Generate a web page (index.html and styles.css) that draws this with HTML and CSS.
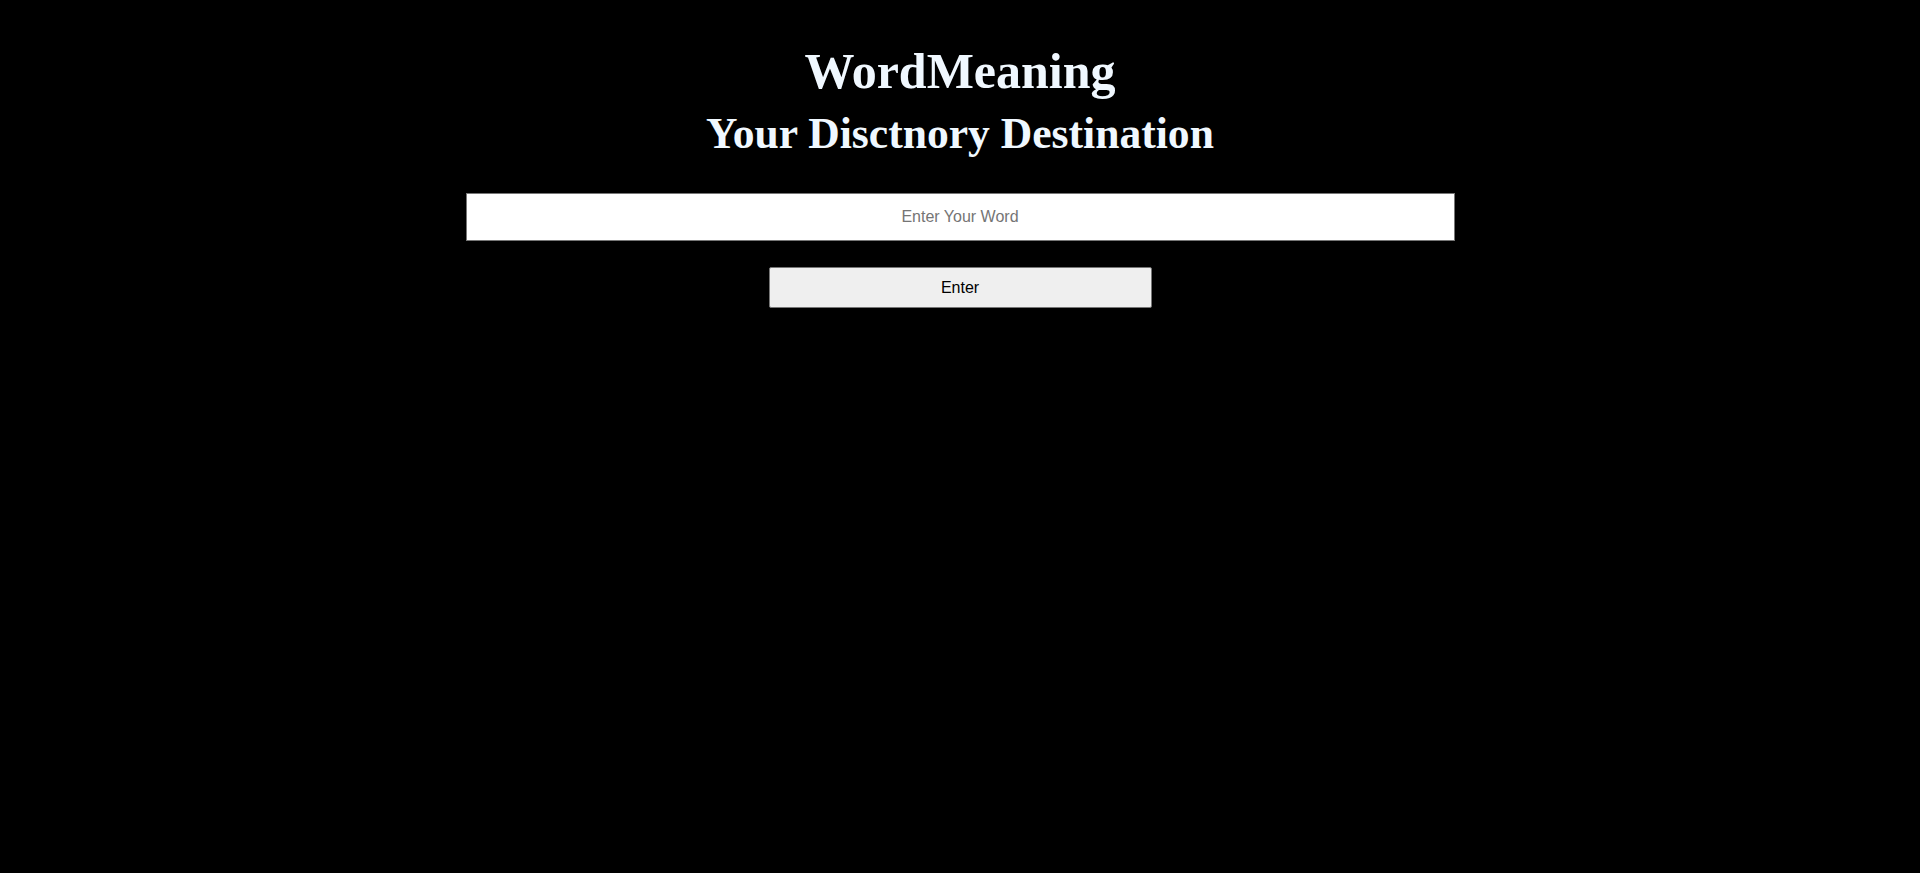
FILE: index.html
```html
<!DOCTYPE html>
<html>
<head>
<meta charset="utf-8">
<link rel="stylesheet" href="styles.css">
</head>
<body>
<main class="page">
  <header class="heading">
    <h1 class="title">WordMeaning</h1>
    <h2 class="subtitle">Your Disctnory Destination</h2>
  </header>
  <form class="search">
    <input class="word-input" type="text" placeholder="Enter Your Word">
    <button class="enter-btn" type="button">Enter</button>
  </form>
</main>
</body>
</html>
```
FILE: styles.css
```css
html, body {
  margin: 0;
  padding: 0;
  background: #000;
  height: 100%;
}
.page {
  display: flex;
  flex-direction: column;
  align-items: center;
  padding-top: 41px;
}
.heading {
  display: flex;
  flex-direction: column;
  align-items: center;
  color: #f0f8ff;
  font-family: "Liberation Serif", "Times New Roman", serif;
  font-weight: bold;
}
.title {
  margin: 0;
  font-size: 50px;
  line-height: 60px;
}
.subtitle {
  margin: 2px 0 0;
  font-size: 43.6px;
  line-height: 60px;
}
.search {
  display: flex;
  flex-direction: column;
  align-items: center;
  margin-top: 30px;
}
.word-input {
  box-sizing: border-box;
  width: 989px;
  height: 48px;
  border: 1px solid #767676;
  background: #fff;
  text-align: center;
  font-family: "Liberation Sans", Arial, sans-serif;
  font-size: 16px;
  padding: 0;
  margin: 0;
}
.word-input::placeholder {
  color: #757575;
}
.enter-btn {
  box-sizing: border-box;
  width: 383px;
  height: 41px;
  margin-top: 26px;
  border: 1px solid #767676;
  border-radius: 2px;
  background: #efefef;
  color: #000;
  font-family: "Liberation Sans", Arial, sans-serif;
  font-size: 16px;
}
```
